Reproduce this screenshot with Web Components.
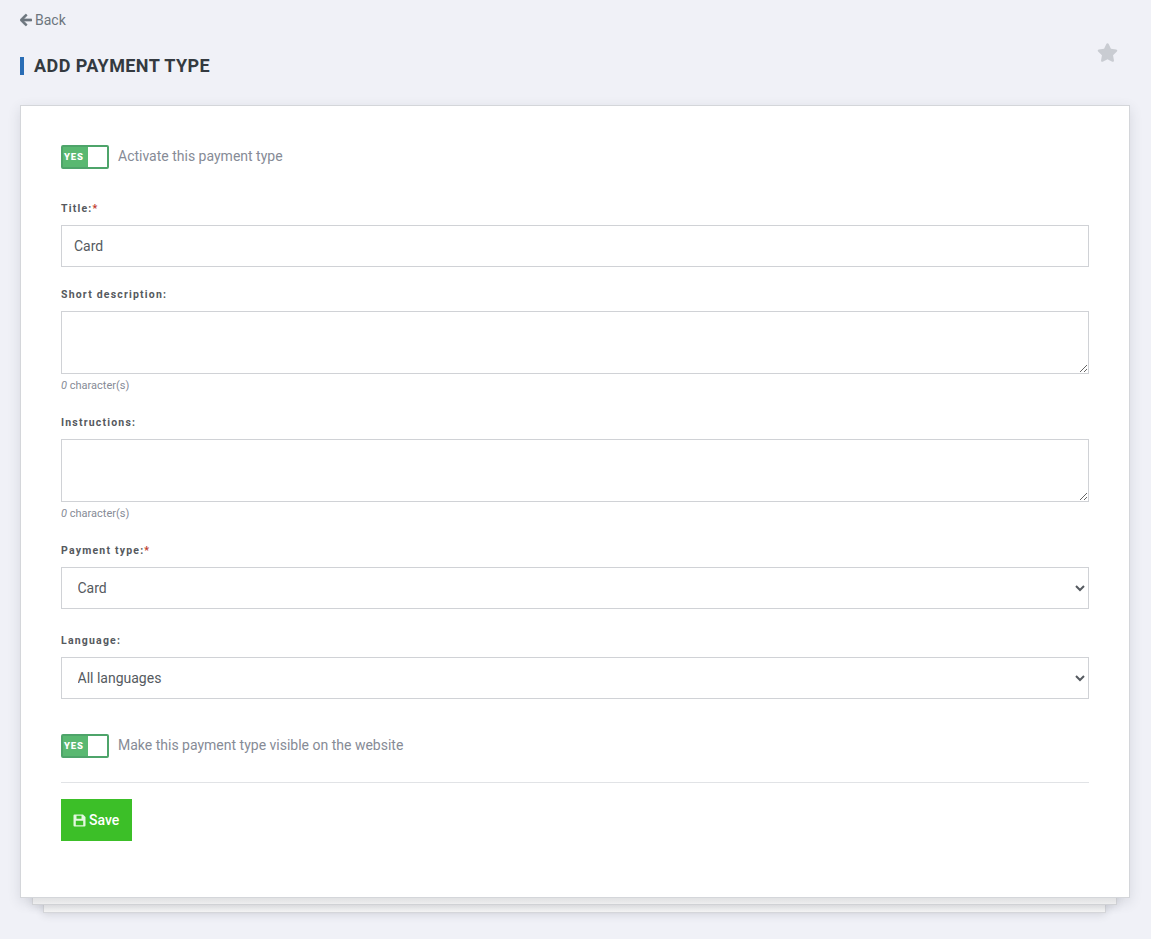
<!DOCTYPE html>
<html>
<head>
<meta charset="utf-8">
<title>Add payment type</title>
<style>
    html, body { margin: 0; background: #f0f1f7; }
    body { font-family: Roboto, "Liberation Sans", sans-serif; }
</style>
</head>
<body>
<payment-page>
    <back-link slot="back">Back</back-link>
    <page-title slot="title">Add payment type</page-title>
    <form-card slot="card">
        <toggle-row style="margin-bottom:31px">Activate this payment type</toggle-row>
        <form-field label="Title:" required gap="19"><text-box value="Card"></text-box></form-field>
        <form-field label="Short description:" gap="22" hint="character(s)"><area-box></area-box></form-field>
        <form-field label="Instructions:" gap="22" hint="character(s)"><area-box></area-box></form-field>
        <form-field label="Payment type:" required gap="23"><select-box value="Card"></select-box></form-field>
        <form-field label="Language:" gap="35"><select-box value="All languages"></select-box></form-field>
        <toggle-row>Make this payment type visible on the website</toggle-row>
        <form-footer>Save</form-footer>
    </form-card>
</payment-page>

<script>
const boxStyle = `
    box-sizing: border-box;
    display: block;
    width: 100%;
    margin: 0;
    border: 1px solid #d0d2d6;
    border-radius: 0;
    background: #fff;
    color: #555a60;
    font: 14px Roboto, "Liberation Sans", sans-serif;
    outline: none;
`;

class PaymentPage extends HTMLElement {
    constructor() {
        super();
        this.attachShadow({ mode: 'open' });
        this.shadowRoot.innerHTML = `
            <style>
            :host { display: block; padding: 12px 21px 26px 20px; height: 939px; box-sizing: border-box; overflow: hidden; }
            .head { display: flex; justify-content: space-between; align-items: flex-start; margin-top: 16px; margin-bottom: 30px; }
            .star { width: 21px; height: 19px; margin: 0 12px 0 0; position: relative; top: -1px; fill: #c9ccd2; }
            </style>
            <slot name="back"></slot>
            <div class="head">
                <slot name="title"></slot>
                <svg class="star" viewBox="0 0 576 512"><path d="M259.3 17.8L194 150.2 47.9 171.5c-26.2 3.8-36.7 36.1-17.7 54.6l105.7 103-25 145.5c-4.5 26.3 23.2 46 46.4 33.7L288 439.6l130.7 68.7c23.2 12.2 50.9-7.4 46.4-33.7l-25-145.5 105.7-103c19-18.5 8.5-50.8-17.7-54.6L382 150.2 316.7 17.8c-11.7-23.6-45.6-23.9-57.4 0z"/></svg>
            </div>
            <slot name="card"></slot>
        `;
    }
}

class BackLink extends HTMLElement {
    constructor() {
        super();
        this.attachShadow({ mode: 'open' });
        this.shadowRoot.innerHTML = `
            <style>
            :host { display: flex; align-items: center; gap: 3px; height: 16px; font-size: 14px; line-height: 16px; color: #6c757d; }
            svg { width: 12px; height: 14px; fill: #6c757d; stroke: #6c757d; stroke-width: 24; }
            </style>
            <svg viewBox="0 0 448 512"><path d="M257.5 445.1l-22.2 22.2c-9.4 9.4-24.6 9.4-33.9 0L7 273c-9.4-9.4-9.4-24.6 0-33.9L201.4 44.7c9.4-9.4 24.6-9.4 33.9 0l22.2 22.2c9.5 9.5 9.3 25-.4 34.3L136.6 216H424c13.3 0 24 10.7 24 24v32c0 13.3-10.7 24-24 24H136.6l120.5 114.8c9.8 9.3 10 24.8.4 34.3z"/></svg>
            <slot></slot>
        `;
    }
}

class PageTitle extends HTMLElement {
    constructor() {
        super();
        this.attachShadow({ mode: 'open' });
        this.shadowRoot.innerHTML = `
            <style>
            :host { display: block; margin-top: 13px; border-left: 4px solid #2a6db5; padding-left: 10px; font-size: 18px; line-height: 18px; font-weight: 700; color: #343a40; text-transform: uppercase; letter-spacing: .42px; }
            </style>
            <slot></slot>
        `;
    }
}

class FormCard extends HTMLElement {
    constructor() {
        super();
        this.attachShadow({ mode: 'open' });
        this.shadowRoot.innerHTML = `
            <style>
            :host { display: block; position: relative; }
            .sheet { position: relative; z-index: 3; box-sizing: border-box; height: 793px; padding: 39px 40px 0 40px; background: #fff; border: 1px solid #d4d6da; box-shadow: 0 4px 12px rgba(60, 64, 80, .14); }
            .layer { position: absolute; background: linear-gradient(#ececec, #f8f8f8); border: 1px solid #d9dadd; box-shadow: 0 2px 8px rgba(60, 64, 80, .14); }
            .one { z-index: 2; left: 12px; right: 13px; bottom: -7px; height: 30px; }
            .two { z-index: 1; left: 23px; right: 24px; bottom: -15px; height: 30px; }
            </style>
            <div class="layer two"></div>
            <div class="layer one"></div>
            <div class="sheet"><slot></slot></div>
        `;
    }
}

class ToggleRow extends HTMLElement {
    constructor() {
        super();
        this.attachShadow({ mode: 'open' });
        this.shadowRoot.innerHTML = `
            <style>
            :host { display: flex; align-items: center; gap: 9px; font-size: 14px; color: #868b96; }
            .switch { box-sizing: border-box; display: flex; align-items: center; justify-content: space-between; width: 48px; height: 24px; padding-left: 1px; background: #59b871; border: 2px solid #4ea46a; border-radius: 2px; }
            .yes { padding-bottom: 2px; font-size: 9.5px; font-weight: 900; letter-spacing: .8px; color: #fff; }
            .knob { width: 19px; height: 20px; background: #fff; }
            .text { padding-bottom: 2px; }
            </style>
            <span class="switch"><span class="yes">YES</span><span class="knob"></span></span>
            <span class="text"><slot></slot></span>
        `;
    }
}

class FormField extends HTMLElement {
    constructor() {
        super();
        this.attachShadow({ mode: 'open' });
        const star = this.hasAttribute('required') ? '<span class="req">*</span>' : '';
        const hint = this.getAttribute('hint');
        this.shadowRoot.innerHTML = `
            <style>
            :host { display: block; margin-bottom: ${this.getAttribute('gap')}px; }
            label { display: block; height: 16px; line-height: 17px; margin-bottom: 9px; font-size: 10.5px; font-weight: 700; letter-spacing: 1.2px; color: #55595e; }
            .req { color: #c0392b; }
            .hint { margin-top: 4px; height: 14px; line-height: 15px; font-size: 11px; color: #868b96; }
            </style>
            <label>${this.getAttribute('label')}${star}</label>
            <slot></slot>
            ${hint ? `<div class="hint"><i>0</i> ${hint}</div>` : ''}
        `;
    }
}

class TextBox extends HTMLElement {
    constructor() {
        super();
        this.attachShadow({ mode: 'open' });
        this.shadowRoot.innerHTML = `
            <style>
            :host { display: block; }
            input { ${boxStyle} height: 42px; padding: 0 12px; }
            </style>
            <input type="text">
        `;
        this.shadowRoot.querySelector('input').value = this.getAttribute('value');
    }
}

class AreaBox extends HTMLElement {
    constructor() {
        super();
        this.attachShadow({ mode: 'open' });
        this.shadowRoot.innerHTML = `
            <style>
            :host { display: block; }
            textarea { ${boxStyle} height: 63px; padding: 6px 12px; }
            </style>
            <textarea></textarea>
        `;
    }
}

class SelectBox extends HTMLElement {
    constructor() {
        super();
        this.attachShadow({ mode: 'open' });
        this.shadowRoot.innerHTML = `
            <style>
            :host { display: block; }
            select { ${boxStyle} height: 42px; padding: 0 11.5px; }
            </style>
            <select><option></option></select>
        `;
        this.shadowRoot.querySelector('option').textContent = this.getAttribute('value');
    }
}

class FormFooter extends HTMLElement {
    constructor() {
        super();
        this.attachShadow({ mode: 'open' });
        this.shadowRoot.innerHTML = `
            <style>
            :host { display: block; margin-top: 24px; border-top: 1px solid #e1e3e6; padding-top: 16px; }
            button { display: inline-flex; align-items: center; gap: 3px; height: 42px; width: 71px; padding: 0 0 0 12px; border: 0; border-radius: 0; background: #3cbf28; color: #fff; font: 500 14px Roboto, "Liberation Sans", sans-serif; }
            svg { width: 13px; height: 13px; fill: #e4f7e0; fill-rule: evenodd; }
            </style>
            <button type="button">
                <svg viewBox="0 0 13 13"><path d="M1.5 .5H10L12.500 3V11.500a1 1 0 0 1-1 1H1.500a1 1 0 0 1-1-1V1.500a1 1 0 0 1 1-1ZM3.500 1.800V4.800H8.500V1.800ZM2.800 6.800V11.200H10.200V6.800Z"/></svg>
                <slot></slot>
            </button>
        `;
    }
}

customElements.define('payment-page', PaymentPage);
customElements.define('back-link', BackLink);
customElements.define('page-title', PageTitle);
customElements.define('form-card', FormCard);
customElements.define('toggle-row', ToggleRow);
customElements.define('form-field', FormField);
customElements.define('text-box', TextBox);
customElements.define('area-box', AreaBox);
customElements.define('select-box', SelectBox);
customElements.define('form-footer', FormFooter);
</script>
</body>
</html>
